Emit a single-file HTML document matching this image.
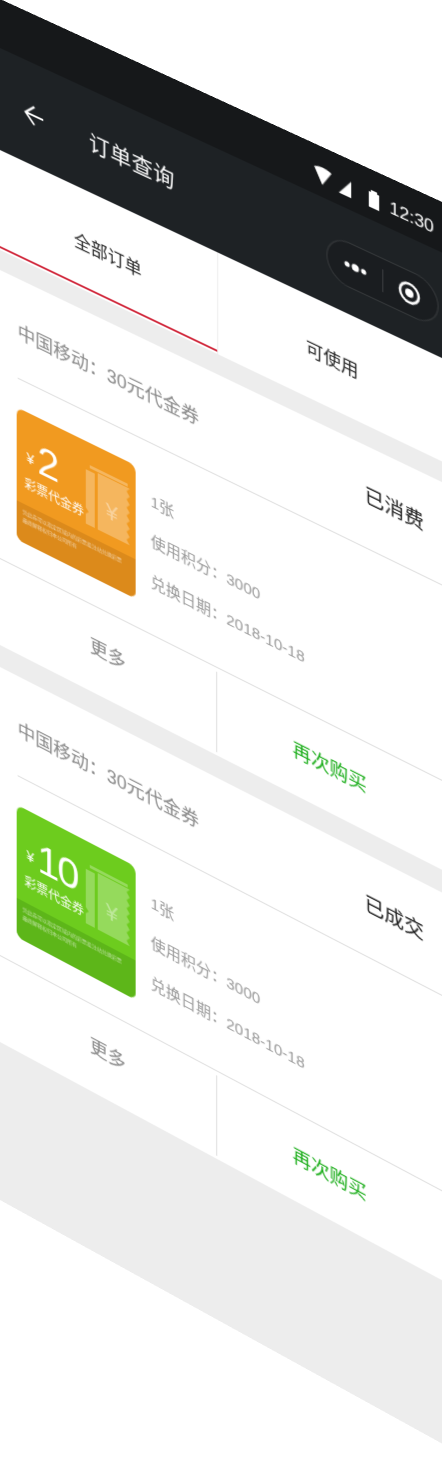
<!DOCTYPE html>
<html><head><meta charset="utf-8">
<style>
html,body{margin:0;padding:0;background:#fff;width:442px;height:1445px;overflow:hidden;}
*{box-sizing:border-box;}
#page{position:absolute;left:0;top:0;width:480px;height:1200px;background:#ededed;
 transform-origin:0 0;transform:matrix3d(0.98,0.45,0,-0.000075, 0,1,0,0, 0,0,1,0, 0,0,0,1);
 font-family:"Liberation Sans","Noto Sans CJK SC",sans-serif;}
.abs{position:absolute;}
#status{left:0;top:-1px;width:480px;height:49px;background:#16181a;}
#nav{left:0;top:48px;width:480px;height:102px;background:#1e2225;}
.title{left:90px;top:88px;color:#fff;font-size:21px;line-height:26px;letter-spacing:0.5px;}
#tabs{left:0;top:150px;width:480px;height:100px;background:#fff;}
.tab{font-size:17px;color:#222;line-height:20px;}
.card{left:0;width:480px;height:375px;background:#fff;}
.ctitle{left:18px;top:42px;font-size:18px;color:#888;line-height:22px;white-space:nowrap;}
.status{left:362px;top:38px;font-size:19px;color:#1a1a1a;line-height:24px;}
.hl{height:1px;background:#dcdcdc;}
.info{left:152px;font-size:15px;color:#999;line-height:18px;white-space:nowrap;}
.coupon{left:17px;top:129px;width:120px;height:132px;border-radius:7px;overflow:hidden;}
.band{left:0;top:93px;width:120px;height:39px;}
.fine{left:6px;font-size:5px;line-height:7px;color:rgba(255,255,255,0.6);white-space:nowrap;}
.btn{font-size:18px;line-height:22px;}
</style></head><body>
<div id="page">
 <div id="status" class="abs"></div>
 <div id="nav" class="abs"></div>
 <svg class="abs" style="left:312px;top:19px" width="70" height="20" viewBox="0 0 70 20">
  <path d="M1 2 Q9 -2 18 2 L9 17 Z" fill="#fff"/>
  <path d="M37 1 L37 17 L25 17 Z" fill="#fff"/>
  <rect x="54" y="2" width="10" height="15" fill="#fff"/>
  <rect x="56" y="0" width="6" height="2" fill="#fff"/>
 </svg>
 <div class="abs" style="left:386px;top:18px;color:#fff;font-size:17px;line-height:20px;">12:30</div>
 <svg class="abs" style="left:23px;top:88px" width="24" height="24" viewBox="0 0 24 24">
  <path d="M21 12 H4 M12 3 L3 12 L12 21" stroke="#fff" stroke-width="2" fill="none"/>
 </svg>
 <div class="abs title">订单查询</div>
 <div class="abs" style="left:325px;top:80px;width:108px;height:44px;border-radius:22px;border:1px solid rgba(255,255,255,0.13);background:#1a1d20;"></div>
 <div class="abs" style="left:379px;top:91px;width:1px;height:22px;background:rgba(255,255,255,0.15);"></div>
 <svg class="abs" style="left:340px;top:94px" width="28" height="16" viewBox="0 0 28 16">
  <circle cx="5" cy="8" r="2.5" fill="#fff"/><circle cx="13" cy="8" r="3.5" fill="#fff"/><circle cx="21" cy="8" r="2.5" fill="#fff"/>
 </svg>
 <svg class="abs" style="left:393px;top:90px" width="24" height="24" viewBox="0 0 24 24">
  <circle cx="12" cy="12" r="9" stroke="#fff" stroke-width="2.5" fill="none"/><circle cx="12" cy="12" r="4" fill="#fff"/>
 </svg>
 <div id="tabs" class="abs">
  <div class="abs tab" style="left:75px;top:45px;">全部订单</div>
  <div class="abs tab" style="left:305px;top:43px;">可使用</div>
  <div class="abs" style="left:218px;top:0;width:1px;height:100px;background:#eee;"></div>
  <div class="abs" style="left:0;top:96px;width:218px;height:2px;background:#d0263a;"></div>
 </div>

 <div class="abs card" style="top:270px;">
  <div class="abs ctitle">中国移动：30元代金券</div>
  <div class="abs status">已消费</div>
  <div class="abs hl" style="left:18px;top:99px;width:470px;"></div>
  <div class="abs coupon" style="background:#f19a20;">
   <div class="abs band" style="background:#dc8a1b;"></div>
   <svg class="abs" style="left:70px;top:22px" width="48" height="64" viewBox="0 0 48 64">
    <g fill="rgba(255,255,255,0.28)">
     <path d="M0 6 H9 V60 H0 V50 L3 47 L0 44 Z"/>
     <path d="M12 4 H44 L41 8 L44 12 L41 16 L44 20 L41 24 L44 28 L41 32 L44 36 L41 40 L44 44 L41 48 L44 52 L41 56 L44 60 H12 Z"/>
     <rect x="4" y="0" width="38" height="3"/>
    </g>
    <text x="20" y="44" font-size="22" fill="rgba(255,255,255,0.4)" font-family="Liberation Sans">¥</text>
   </svg>
   <div class="abs" style="left:10px;top:37px;color:#fff;font-size:14px;">¥</div>
   <div class="abs" style="left:21px;top:20px;color:#fff;font-size:40px;line-height:44px;">2</div>
   <div class="abs" style="left:8px;top:64px;color:#fff;font-size:12px;line-height:16px;">彩票代金券</div>
   <div class="abs fine" style="top:99px;">凭此券可以指定区域内的彩票投注站兑换彩票</div>
   <div class="abs fine" style="top:107px;">最终解释权归本公司所有</div>
  </div>
  <div class="abs info" style="top:149px;">1张</div>
  <div class="abs info" style="top:188px;">使用积分：3000</div>
  <div class="abs info" style="top:228px;">兑换日期：2018-10-18</div>
  <div class="abs hl" style="left:0;top:288px;width:480px;"></div>
  <div class="abs" style="left:217px;top:293px;width:1px;height:79px;background:#ddd;"></div>
  <div class="abs btn" style="left:91px;top:319px;color:#888;">更多</div>
  <div class="abs btn" style="left:292px;top:320px;color:#1aad19;">再次购买</div>
 </div>

 <div class="abs card" style="top:667px;">
  <div class="abs ctitle">中国移动：30元代金券</div>
  <div class="abs status">已成交</div>
  <div class="abs hl" style="left:18px;top:99px;width:470px;"></div>
  <div class="abs coupon" style="background:#6dcc1e;">
   <div class="abs band" style="background:#5db619;"></div>
   <svg class="abs" style="left:70px;top:22px" width="48" height="64" viewBox="0 0 48 64">
    <g fill="rgba(255,255,255,0.28)">
     <path d="M0 6 H9 V60 H0 V50 L3 47 L0 44 Z"/>
     <path d="M12 4 H44 L41 8 L44 12 L41 16 L44 20 L41 24 L44 28 L41 32 L44 36 L41 40 L44 44 L41 48 L44 52 L41 56 L44 60 H12 Z"/>
     <rect x="4" y="0" width="38" height="3"/>
    </g>
    <text x="20" y="44" font-size="22" fill="rgba(255,255,255,0.4)" font-family="Liberation Sans">¥</text>
   </svg>
   <div class="abs" style="left:10px;top:37px;color:#fff;font-size:14px;">¥</div>
   <div class="abs" style="left:21px;top:20px;color:#fff;font-size:40px;line-height:44px;letter-spacing:-2px;">10</div>
   <div class="abs" style="left:8px;top:64px;color:#fff;font-size:12px;line-height:16px;">彩票代金券</div>
   <div class="abs fine" style="top:99px;">凭此券可以指定区域内的彩票投注站兑换彩票</div>
   <div class="abs fine" style="top:107px;">最终解释权归本公司所有</div>
  </div>
  <div class="abs info" style="top:149px;">1张</div>
  <div class="abs info" style="top:188px;">使用积分：3000</div>
  <div class="abs info" style="top:228px;">兑换日期：2018-10-18</div>
  <div class="abs hl" style="left:0;top:288px;width:480px;"></div>
  <div class="abs" style="left:217px;top:293px;width:1px;height:79px;background:#ddd;"></div>
  <div class="abs btn" style="left:91px;top:319px;color:#888;">更多</div>
  <div class="abs btn" style="left:292px;top:320px;color:#1aad19;">再次购买</div>
 </div>
</div>
</body></html>
